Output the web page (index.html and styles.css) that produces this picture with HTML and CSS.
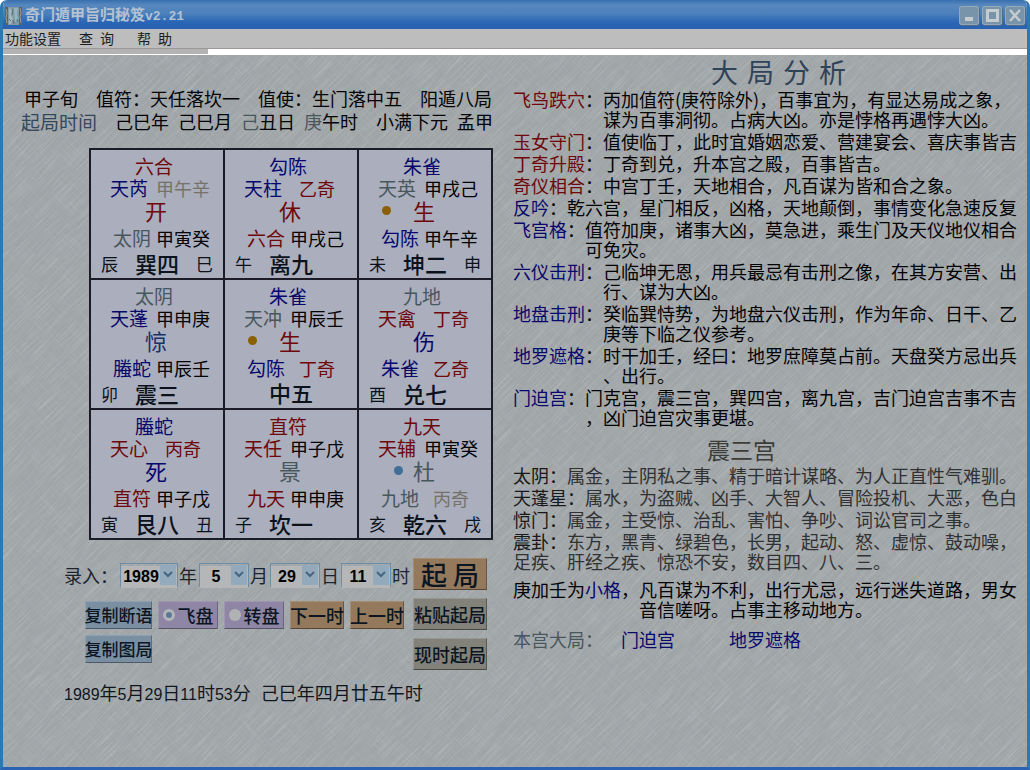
FILE: index.html
```html
<!DOCTYPE html>
<html lang="zh-CN">
<head>
<meta charset="utf-8">
<title>奇门遁甲旨归秘笈v2.21</title>
<link rel="stylesheet" href="styles.css">
</head>
<body>
<div class="window">
  <header class="titlebar">
    <svg class="app-icon" width="17" height="18" viewBox="0 0 17 18" aria-hidden="true">
      <rect width="17" height="18" fill="#8199a4"/>
      <path d="M0 0h3v18h-3z" fill="#56616a"/><path d="M14 0h3v18h-3z" fill="#5f6064"/>
      <path d="M4 1l3 2-1 5 2 3-2 6H4z" fill="#a3b7bf"/><path d="M9 1h4l-1 6 1 5-3 3z" fill="#93b4c4"/>
      <path d="M8 2l-1 6M8 13l1 4M12 12l1 3M4 12l2 2" stroke="#5c6c76" fill="none"/>
      <path d="M1 2l1 4-1 5 1 5M15 1l1 5-1 4 1 6" stroke="#a39c92" fill="none"/>
    </svg>
    <h1 class="title">奇门遁甲旨归秘笈<span class="version">v2.21</span></h1>
    <div class="window-buttons">
      <button class="win-btn" aria-label="最小化"><svg width="20" height="19" viewBox="0 0 20 19"><path d="M6 11h8v4H6z" fill="#c6ccce"/></svg></button>
      <button class="win-btn" aria-label="最大化"><svg width="20" height="19" viewBox="0 0 20 19"><path d="M5.500 4.500h10v10h-10z" fill="none" stroke="#c6ccce" stroke-width="3"/></svg></button>
      <button class="win-btn" aria-label="关闭"><svg width="20" height="19" viewBox="0 0 20 19"><path d="M5 4l10 11M15 4L5 15" stroke="#c6ccce" stroke-width="2.500"/></svg></button>
    </div>
  </header>
  <nav class="menu">
    <button class="menu-item">功能设置</button>
    <button class="menu-item">查&ensp;询</button>
    <button class="menu-item">帮&ensp;助</button>
  </nav>
  <div class="strip"><div class="strip-fill"></div></div>

  <main class="content">
    <svg class="texture" aria-hidden="true">
      <filter id="light" x="0" y="0" width="100%" height="100%">
        <feTurbulence type="fractalNoise" baseFrequency="0.03 0.9" numOctaves="2" seed="7"/>
        <feColorMatrix values="0 0 0 0 0.8  0 0 0 0 0.82  0 0 0 0 0.84  1.600 0 0 0 -0.7"/>
      </filter>
      <filter id="dark" x="0" y="0" width="100%" height="100%">
        <feTurbulence type="fractalNoise" baseFrequency="0.03 0.8" numOctaves="2" seed="21"/>
        <feColorMatrix values="0 0 0 0 0.42  0 0 0 0 0.44  0 0 0 0 0.46  1.600 0 0 0 -0.7"/>
      </filter>
      <g transform="rotate(-45)">
        <rect x="-800" y="-100" width="1700" height="1500" filter="url(#light)"/>
        <rect x="-800" y="-100" width="1700" height="1500" filter="url(#dark)"/>
      </g>
      <g transform="rotate(45)" opacity="0.4">
        <rect x="-100" y="-900" width="1700" height="1700" filter="url(#light)"/>
      </g>
    </svg>

    <section class="left">
      <div class="summary">
        <p class="summary-line wide"><span>甲子旬</span><span>值符：天任落坎一</span><span>值使：生门落中五</span><span>阳遁八局</span></p>
        <p class="summary-line"><span class="label">起局时间</span><span>己巳年</span><span>己巳月</span><span><i class="slate">己</i>丑日</span><span><i class="slate">庚</i>午时</span><span class="term-name">小满下元</span><span>孟甲</span></p>
      </div>

      <div class="board">
        <div class="palace"><p class="god red">六合</p><p class="pair"><b class="blue">天芮</b><span class="tan">甲午辛</span></p><p class="gate"><span class="red">开</span></p><p class="pair low"><b class="slate">太阴</b><span>甲寅癸</span></p><p class="base"><span>辰</span><strong>巽四</strong><span>巳</span></p></div>
        <div class="palace"><p class="god blue">勾陈</p><p class="pair"><b class="blue">天柱</b><span class="red">乙奇</span></p><p class="gate"><span class="red">休</span></p><p class="pair low"><b class="red">六合</b><span>甲戌己</span></p><p class="base"><span>午</span><strong>离九</strong><span></span></p></div>
        <div class="palace"><p class="god blue">朱雀</p><p class="pair"><b class="slate">天英</b><span>甲戌己</span></p><p class="gate"><i class="dot"></i><span class="red">生</span></p><p class="pair low"><b class="blue">勾陈</b><span>甲午辛</span></p><p class="base"><span>未</span><strong>坤二</strong><span>申</span></p></div>
        <div class="palace"><p class="god slate">太阴</p><p class="pair"><b class="blue">天蓬</b><span>甲申庚</span></p><p class="gate"><span class="navy">惊</span></p><p class="pair low"><b class="blue">螣蛇</b><span>甲辰壬</span></p><p class="base"><span>卯</span><strong>震三</strong><span></span></p></div>
        <div class="palace"><p class="god blue">朱雀</p><p class="pair"><b class="slate">天冲</b><span>甲辰壬</span></p><p class="gate"><i class="dot"></i><span class="red">生</span></p><p class="pair low"><b class="blue">勾陈</b><span class="red">丁奇</span></p><p class="base"><span></span><strong>中五</strong><span></span></p></div>
        <div class="palace"><p class="god slate">九地</p><p class="pair"><b class="red">天禽</b><span class="red">丁奇</span></p><p class="gate"><span class="blue">伤</span></p><p class="pair low"><b class="blue">朱雀</b><span class="red">乙奇</span></p><p class="base"><span>酉</span><strong>兑七</strong><span></span></p></div>
        <div class="palace"><p class="god blue">螣蛇</p><p class="pair"><b class="red">天心</b><span class="red">丙奇</span></p><p class="gate"><span class="blue">死</span></p><p class="pair low"><b class="red">直符</b><span>甲子戊</span></p><p class="base"><span>寅</span><strong>艮八</strong><span>丑</span></p></div>
        <div class="palace"><p class="god red">直符</p><p class="pair"><b class="red">天任</b><span>甲子戊</span></p><p class="gate"><span class="slate">景</span></p><p class="pair low"><b class="red">九天</b><span>甲申庚</span></p><p class="base"><span>子</span><strong>坎一</strong><span></span></p></div>
        <div class="palace"><p class="god red">九天</p><p class="pair"><b class="red">天辅</b><span>甲寅癸</span></p><p class="gate"><i class="dot water"></i><span class="slate">杜</span></p><p class="pair low"><b class="slate">九地</b><span class="tan">丙奇</span></p><p class="base"><span>亥</span><strong>乾六</strong><span>戌</span></p></div>
      </div>

      <form class="panel">
        <div class="panel-main">
          <div class="entry">
            <span class="entry-label">录入：</span>
            <span class="combo year"><select id="year"><option>1989</option></select><svg width="16" height="20" viewBox="0 0 16 20"><path d="M4 7l4 4 4-4" fill="none" stroke="#466583" stroke-width="2"/></svg></span><label for="year">年</label>
            <span class="combo"><select id="month"><option>5</option></select><svg width="16" height="20" viewBox="0 0 16 20"><path d="M4 7l4 4 4-4" fill="none" stroke="#466583" stroke-width="2"/></svg></span><label for="month">月</label>
            <span class="combo"><select id="day"><option>29</option></select><svg width="16" height="20" viewBox="0 0 16 20"><path d="M4 7l4 4 4-4" fill="none" stroke="#466583" stroke-width="2"/></svg></span><label for="day">日</label>
            <span class="combo"><select id="hour"><option>11</option></select><svg width="16" height="20" viewBox="0 0 16 20"><path d="M4 7l4 4 4-4" fill="none" stroke="#466583" stroke-width="2"/></svg></span><label for="hour">时</label>
          </div>
          <div class="actions">
            <button type="button" class="btn steel">复制断语</button>
            <label class="btn violet"><input type="radio" name="mode" checked>飞盘</label>
            <label class="btn violet"><input type="radio" name="mode">转盘</label>
            <button type="button" class="btn bronze">下一时</button>
            <button type="button" class="btn bronze">上一时</button>
          </div>
          <div class="actions">
            <button type="button" class="btn steel">复制图局</button>
          </div>
        </div>
        <div class="panel-side">
          <button type="button" class="btn side bronze main">起 局</button>
          <button type="button" class="btn side stone">粘贴起局</button>
          <button type="button" class="btn side stone">现时起局</button>
        </div>
      </form>
      <p class="stamp"><span><i>1989</i>年<i>5</i>月<i>29</i>日<i>11</i>时<i>53</i>分</span><span>己巳年四月廿五午时</span></p>
    </section>

    <section class="right">
      <h2 class="heading">大&#8196;局&#8196;分&#8196;析</h2>
      <dl class="notes">
        <div><dt class="red">飞鸟跌穴<i>：</i></dt><dd>丙加值符(庚符除外)，百事宜为，有显达易成之象，<br>谋为百事洞彻。占病大凶。亦是悖格再遇悖大凶。</dd></div>
        <div><dt class="red">玉女守门<i>：</i></dt><dd>值使临丁，此时宜婚姻恋爱、营建宴会、喜庆事皆吉</dd></div>
        <div><dt class="red">丁奇升殿<i>：</i></dt><dd>丁奇到兑，升本宫之殿，百事皆吉。</dd></div>
        <div><dt class="red">奇仪相合<i>：</i></dt><dd>中宫丁壬，天地相合，凡百谋为皆和合之象。</dd></div>
        <div><dt class="blue">反吟<i>：</i></dt><dd>乾六宫，星门相反，凶格，天地颠倒，事情变化急速反复</dd></div>
        <div><dt class="blue">飞宫格<i>：</i></dt><dd>值符加庚，诸事大凶，莫急进，乘生门及天仪地仪相合<br>可免灾。</dd></div>
        <div><dt class="blue">六仪击刑<i>：</i></dt><dd>己临坤无恩，用兵最忌有击刑之像，在其方安营、出<br>行、谋为大凶。</dd></div>
        <div><dt class="blue">地盘击刑<i>：</i></dt><dd>癸临巽恃势，为地盘六仪击刑，作为年命、日干、乙<br>庚等下临之仪参考。</dd></div>
        <div><dt class="blue">地罗遮格<i>：</i></dt><dd>时干加壬，经曰：地罗庶障莫占前。天盘癸方忌出兵<br>、出行。</dd></div>
        <div><dt class="blue">门迫宫<i>：</i></dt><dd>门克宫，震三宫，巽四宫，离九宫，吉门迫宫吉事不吉<br>，凶门迫宫灾事更堪。</dd></div>
      </dl>
      <h2 class="heading palace-name">震三宫</h2>
      <div class="notes detail">
        <p><b>太阴：</b>属金，主阴私之事、精于暗计谋略、为人正直性气难驯。</p>
        <p><b>天蓬星：</b>属水，为盗贼、凶手、大智人、冒险投机、大恶，色白</p>
        <p><b>惊门：</b>属金，主受惊、治乱、害怕、争吵、词讼官司之事。</p>
        <p><b>震卦：</b>东方，黑青、绿碧色，长男，起动、怒、虚惊、鼓动噪，<br>足疾、肝经之疾、惊恐不安，数目四、八、三。</p>
      </div>
      <div class="pattern"><span>庚加壬为<i class="blue">小格</i>，</span><span>凡百谋为不利，出行尤忌，远行迷失道路，男女<br>音信嗟呀。占事主移动地方。</span></div>
      <p class="local"><span class="slate">本宫大局：</span><span class="blue">门迫宫</span><span class="blue">地罗遮格</span></p>
    </section>
  </main>
</div>
</body>
</html>
```

FILE: styles.css
```css
* { box-sizing: border-box; margin: 0; padding: 0; }
html, body { height: 100%; }
body {
  background: #fff;
  color: #020305;
  font: 18px/20px "Noto Sans CJK SC", sans-serif;
  text-spacing-trim: space-all;
}
i { font-style: normal; }
b { font-weight: 400; }
button, select { font: inherit; color: inherit; }

.red { color: #6e080a; }
.blue { color: #08086c; }
.navy { color: #1c3068; }
.slate { color: #48575c; }
.tan { color: #76726a; }

.window {
  min-height: 100%;
  display: flex;
  flex-direction: column;
  border: solid #2c78b0;
  border-width: 0 3px 3px;
  border-bottom-color: #2c62b4;
  border-radius: 7px 7px 0 0;
  overflow: hidden;
}
.titlebar {
  display: flex;
  align-items: center;
  height: 29px;
  margin: 0 -3px;
  padding: 2px 5px 0 5px;
  background: linear-gradient(#376fae, #5788be 5px, #4b80bb 14px, #2b66b6 22px, #2860b2);
  flex: none;
}
.title { margin-left: 3px; font-size: 15px; line-height: 20px; font-weight: 700; color: #b4c2d2; flex: 1; }
.version { font: bold 13px/20px "Liberation Mono", monospace; }
.window-buttons { display: flex; gap: 3px; }
.win-btn {
  width: 20px;
  height: 19px;
  border: 0;
  border-radius: 3px;
  background: #7794aa;
  box-shadow: inset 0 0 0 1px #93a9b8, 1px 1px 0 #4f6c86;
}
.win-btn svg { display: block; }

.menu { display: flex; gap: 18px; height: 20px; padding-left: 2px; background: #bdbdbd; border-bottom: 1px solid #999; flex: none; }
.menu-item { border: 0; background: none; font-size: 14px; line-height: 19px; color: #1c1c1c; }
.menu-item + .menu-item + .menu-item { margin-left: 5px; }
.strip { height: 6px; background: #fff; flex: none; }
.strip-fill { width: 20%; height: 5px; background: #b3b3b3; }

.content {
  flex: 1;
  display: grid;
  grid-template-columns: 490px minmax(0, 1fr);
  column-gap: 20px;
  position: relative;
  background: #9ea3a6;
}
.texture { position: absolute; inset: 0; width: 100%; height: 100%; opacity: 0.4; }
.left, .right { position: relative; white-space: nowrap; }
.left { padding-top: 32px; }

.summary { padding-left: 18px; }
.summary-line { display: flex; gap: 9px; line-height: 23px; }
.summary-line.wide { gap: 18px; padding-left: 3px; }
.label { margin-right: 9px; font-size: 19px; color: #34485c; }
.term-name { margin-left: 9px; }

.board {
  display: grid;
  grid-template-columns: repeat(3, 132px);
  gap: 2px;
  width: max-content;
  margin: 15px 0 0 86px;
  padding: 2px;
  background: #1c1c29;
}
.palace { min-height: 128px; padding-top: 5px; background: #aaaebd; line-height: 22px; }
.god { padding-right: 6px; font-size: 19px; text-align: center; }
.pair { display: grid; grid-template-columns: 38px 54px; column-gap: 8px; padding-left: 19px; }
.pair.low { margin-top: 4px; padding-left: 22px; column-gap: 5px; }
.pair b { font-size: 19px; }
.pair span { text-align: center; }
.gate { display: flex; justify-content: center; align-items: flex-start; height: 24px; font-size: 22px; position: relative; }
.gate span { margin-right: 2px; }
.dot { position: absolute; top: 7px; left: 23px; width: 9px; height: 9px; border-radius: 50%; background: #8c6000; }
.dot.water { left: 35px; background: #416e98; }
.base { display: grid; grid-template-columns: 1fr 44px 1fr; align-items: center; padding: 0 10px; line-height: 26px; color: #0b121c; }
.base span { font-size: 17px; padding-top: 2px; }
.base span:last-child { text-align: right; }
.base strong { font-size: 22px; font-weight: 500; }

.panel { display: flex; justify-content: space-between; padding: 18px 6px 0 61px; }
.panel-main { display: flex; flex-direction: column; }
.panel-side { display: flex; flex-direction: column; gap: 8px; }
.entry { display: flex; align-items: center; height: 34px; color: #1b2530; }
.combo { position: relative; width: 50px; height: 24px; margin: 0 1px 0 2px; border: 1px solid #6d8ea8; }
.combo.year { width: 58px; }
.combo select {
  width: 100%;
  height: 100%;
  padding-right: 16px;
  border: 0;
  appearance: none;
  background: #b4b6b8;
  color: #000;
  font: bold 16px/22px "Liberation Sans", sans-serif;
  text-align: center;
  text-align-last: center;
}
.combo svg { position: absolute; top: 1px; right: 1px; background: #93aabd; pointer-events: none; }
.actions { display: flex; gap: 6px; padding: 9px 0 0 21px; }
.btn {
  display: flex;
  align-items: center;
  justify-content: center;
  height: 28px;
  border: 1px solid;
  font-size: 17px;
  line-height: 24px;
  color: #0c1622;
  font-weight: 500;
}
.steel { width: 67px; background: #7b8fa3; border-color: #8ea1b0 #5a6c7e #4c5a68 #8ea1b0; }
.violet { width: 60px; gap: 3px; font-size: 18px; background: #8e86a4; border-color: #a096b0 #6a6480 #575366 #a096b0; }
.violet input { appearance: none; width: 12px; height: 12px; border-radius: 50%; background: #b0b2b4; }
.violet input:checked { border: 3px solid #b4b6b8; background: #5c7896; }
.bronze { width: 54px; font-size: 18px; background: #94795c; border-color: #a58c70 #6b5640 #574636 #a58c70; }
.side { width: 74px; height: 32px; font-size: 18px; }
.stone { background: #83827a; border-color: #98978f #5a5a54 #484844 #98978f; }
.side.main { font-size: 26px; }
.actions + .actions { padding-top: 6px; }
.stamp { display: flex; gap: 10px; padding: 12px 0 0 61px; color: #10161e; }
.stamp i { font-family: "Liberation Sans", sans-serif; font-size: 16px; }

.heading { padding-left: 198px; font-size: 27px; line-height: 34px; font-weight: 400; color: #2f4358; }
.notes { display: flex; flex-direction: column; gap: 2px; }
.notes > div { display: flex; }
.notes dt i { color: #020305; }
.palace-name { padding: 6px 0 0 194px; font-size: 23px; line-height: 32px; color: #3c3c38; }
.detail { color: #303132; }
.detail b { color: #16181a; }
.pattern { display: flex; padding-top: 8px; }
.local { display: flex; padding-top: 10px; }
.local span + span { margin-left: 18px; }
.local span + span + span { margin-left: 54px; }
```
